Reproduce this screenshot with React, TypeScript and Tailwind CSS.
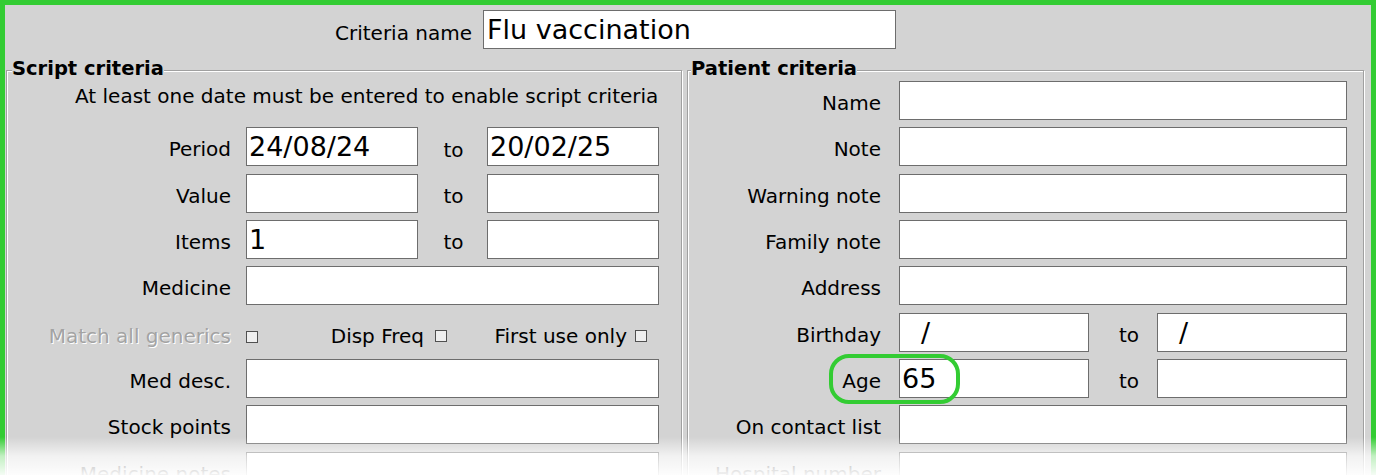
import React from 'react';

const inputCls = "h-[39px] bg-white border border-[#6d6d6d] flex items-center pl-[2px] text-[27px] leading-none text-black overflow-hidden whitespace-pre";

function Box({ w, value = "", pad = "" }: { w: string; value?: string; pad?: string }) {
  return <div className={`${inputCls} ${w} ${pad}`}>{value}</div>;
}

function Check() {
  return <span className="inline-block w-[12px] h-[12px] border-[1.5px] border-[#505050] bg-[#efefef] shrink-0"></span>;
}

function ScriptRow({ label, from = "", to = "", range = true }: { label: string; from?: string; to?: string; range?: boolean }) {
  return (
    <div className="flex items-center h-[39px]">
      <div className="w-[224px] text-right pt-[6px] leading-[23px] whitespace-nowrap">{label}</div>
      <div className="ml-[15px] flex items-center">
        {range ? (
          <>
            <Box w="w-[172px]" value={from} />
            <div className="w-[69px] text-center pt-[6px] pl-[2px]">to</div>
            <Box w="w-[172px]" value={to} />
          </>
        ) : (
          <Box w="w-[413px]" value={from} />
        )}
      </div>
    </div>
  );
}

function PatientRow({ label, children }: { label: string; children?: React.ReactNode }) {
  return (
    <div className="relative flex items-center h-[39px]">
      <div className="w-[193px] text-right pt-[6px] leading-[23px] whitespace-nowrap">{label}</div>
      <div className="ml-[18px] flex items-center">
        {children ?? <Box w="w-[448px]" />}
      </div>
    </div>
  );
}

export default function App() {
  return (
    <div className="relative w-[1376px] h-[475px] overflow-hidden font-['DejaVu_Sans',sans-serif] text-[20px] text-black">
      <div className="h-[475px] bg-[#d3d3d3] border-[5px] border-b-0 border-[#33cc33]">
        {/* criteria name */}
        <div className="flex items-center mt-[5px]">
          <div className="w-[467px] text-right pt-[7px]">Criteria name</div>
          <div className="ml-[11px]">
            <Box w="w-[413px]" value="Flu vaccination" pad="pl-[3px]" />
          </div>
        </div>

        <div className="flex mt-[21px]">
          {/* script criteria */}
          <div className="relative ml-[1px] w-[676px] h-[420px] border border-[#a0a0a0] shadow-[inset_1px_1px_0_#fff,1px_1px_0_#fff]">
            <div className="absolute left-[5px] -top-[13px] leading-[22px] font-bold text-[19.5px] bg-[#d3d3d3]">Script criteria</div>
            <div className="pt-[10px] flex flex-col gap-[7.33px]">
              <div className="h-[39px] pl-[68px] pt-[4px] leading-[22px] whitespace-nowrap">At least one date must be entered to enable script criteria</div>
              <ScriptRow label="Period" from="24/08/24" to="20/02/25" />
              <ScriptRow label="Value" />
              <ScriptRow label="Items" from="1" />
              <ScriptRow label="Medicine" range={false} />
              <div className="flex items-center h-[39px] pt-[7px]">
                <div className="w-[224px] text-right text-[#a3a3a3] [text-shadow:1px_1px_0_#fff] whitespace-nowrap">Match all generics</div>
                <div className="ml-[15px]"><Check /></div>
                <div className="w-[189px] flex items-center justify-end gap-[11px]">
                  <span>Disp Freq</span>
                  <Check />
                </div>
                <div className="w-[200px] flex items-center justify-end gap-[8px]">
                  <span>First use only</span>
                  <Check />
                </div>
              </div>
              <ScriptRow label="Med desc." range={false} />
              <ScriptRow label="Stock points" range={false} />
              <ScriptRow label="Medicine notes" range={false} />
            </div>
          </div>

          {/* patient criteria */}
          <div className="relative ml-[5px] w-[677px] h-[420px] border border-[#a0a0a0] shadow-[inset_1px_1px_0_#fff,1px_1px_0_#fff]">
            <div className="absolute left-[3px] -top-[13px] leading-[22px] font-bold text-[19.5px] bg-[#d3d3d3]">Patient criteria</div>
            <div className="pt-[10px] flex flex-col gap-[7.33px]">
              <PatientRow label="Name" />
              <PatientRow label="Note" />
              <PatientRow label="Warning note" />
              <PatientRow label="Family note" />
              <PatientRow label="Address" />
              <PatientRow label="Birthday">
                <Box w="w-[190px]" value="/" pad="pl-[21px]" />
                <div className="w-[68px] text-center pt-[6px] pl-[12px]">to</div>
                <Box w="w-[190px]" value="/" pad="pl-[21px]" />
              </PatientRow>
              <PatientRow label="Age">
                <Box w="w-[190px]" value="65" />
                <div className="w-[68px] text-center pt-[6px] pl-[12px]">to</div>
                <Box w="w-[190px]" />
                <span className="absolute left-[141px] -top-[5px] w-[131px] h-[50px] rounded-[20px] border-4 border-[#33cc33] z-10"></span>
              </PatientRow>
              <PatientRow label="On contact list" />
              <PatientRow label="Hospital number" />
            </div>
          </div>
        </div>
      </div>
      <div className="absolute left-0 right-0 bottom-0 h-[38px] bg-linear-to-b from-white/0 via-white/70 to-white/95"></div>
    </div>
  );
}
